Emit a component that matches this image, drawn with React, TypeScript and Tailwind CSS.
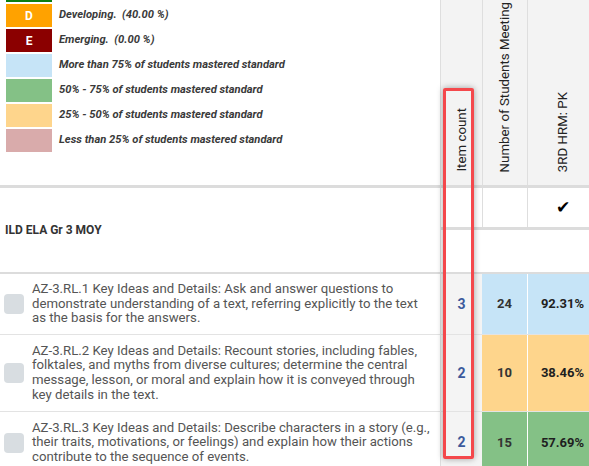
import React from 'react'

const legend = [
  { color: 'bg-[#0b7d12]', letter: '', label: '' },
  { color: 'bg-[#ffa200]', letter: 'D', label: 'Developing.  (40.00 %)' },
  { color: 'bg-[#8b0000]', letter: 'E', label: 'Emerging.  (0.00 %)' },
  { color: 'bg-[#c6e4f7]', letter: '', label: 'More than 75% of students mastered standard' },
  { color: 'bg-[#84c186]', letter: '', label: '50% - 75% of students mastered standard' },
  { color: 'bg-[#fed58c]', letter: '', label: '25% - 50% of students mastered standard' },
  { color: 'bg-[#d9abab]', letter: '', label: 'Less than 25% of students mastered standard' },
]

const rows = [
  {
    text: 'AZ-3.RL.1 Key Ideas and Details: Ask and answer questions to demonstrate understanding of a text, referring explicitly to the text as the basis for the answers.',
    count: 3,
    students: 24,
    pct: '92.31%',
    bg: 'bg-[#c6e4f7]',
    h: 'h-[61px]',
  },
  {
    text: 'AZ-3.RL.2 Key Ideas and Details: Recount stories, including fables, folktales, and myths from diverse cultures; determine the central message, lesson, or moral and explain how it is conveyed through key details in the text.',
    count: 2,
    students: 10,
    pct: '38.46%',
    bg: 'bg-[#fed58c]',
    h: 'h-[77px]',
  },
  {
    text: 'AZ-3.RL.3 Key Ideas and Details: Describe characters in a story (e.g., their traits, motivations, or feelings) and explain how their actions contribute to the sequence of events.',
    count: 2,
    students: 15,
    pct: '57.69%',
    bg: 'bg-[#84c186]',
    h: 'h-[62px]',
  },
]

function VerticalHeader({ label, width }: { label: string; width: string }) {
  return (
    <div className={`${width} h-full border-l border-[#dedede] bg-[#f3f3f3] flex flex-col justify-end items-center pb-[13px] overflow-hidden`}>
      <span className="[writing-mode:vertical-rl] rotate-180 whitespace-nowrap text-[13.3px] leading-none text-[#222]">
        {label}
      </span>
    </div>
  )
}

export default function App() {
  return (
    <div className="relative w-[589px] h-[466px] overflow-hidden bg-white font-['Roboto',sans-serif]">
      <div className="w-[597px]">
        {/* Header */}
        <div className="flex h-[188px] border-b-[3px] border-[#dcdcdc]">
          <div className="w-[440px] overflow-hidden">
            <div className="-mt-[21px] pl-[6px] flex flex-col gap-[2px]">
              {legend.map((l, i) => (
                <div key={i} className="flex items-center">
                  <div className={`${l.color} w-[46px] h-[23px] flex items-center justify-center text-white font-bold text-[12px]`}>
                    {l.letter}
                  </div>
                  <span className="ml-[7px] whitespace-pre italic font-bold text-[11.2px] text-[#3a3a3a]">
                    {l.label}
                  </span>
                </div>
              ))}
            </div>
          </div>
          <VerticalHeader label="Item count" width="w-[42px]" />
          <VerticalHeader label="Number of Students Meeting" width="w-[45px]" />
          <VerticalHeader label="3RD HRM: PK" width="w-[70px]" />
        </div>

        {/* Assessment group row */}
        <div className="flex h-[86px] border-b-2 border-[#dcdcdc]">
          <div className="w-[440px] flex items-center pl-[5px] font-bold text-[12px] text-[#333]">
            ILD ELA Gr 3 MOY
          </div>
          <div className="flex-1 flex flex-col border-l border-[#dedede]">
            <div className="flex h-[42px] border-b-[3px] border-[#dcdcdc]">
              <div className="w-[41px]" />
              <div className="w-[45px] border-l border-[#dedede]" />
              <div className="w-[70px] border-l border-[#dedede] flex items-center justify-center text-[17px] leading-none text-black">
                ✔
              </div>
            </div>
            <div className="flex-1" />
          </div>
        </div>

        {/* Standards */}
        {rows.map((r, i) => (
          <div key={i} className={`flex ${r.h} border-b border-[#e3e3e3]`}>
            <div className="w-[440px] flex items-center pl-[4px]">
              <div className="w-5 h-5 shrink-0 rounded-[4px] bg-[#d8dde1]" />
              <p className="ml-[8px] w-[400px] text-[13.2px] leading-[14.6px] text-[#555]">{r.text}</p>
            </div>
            <div className="w-[42px] border-l border-[#dedede] bg-[#f4f4f4] flex items-center justify-center font-bold text-[14px] text-[#3b5a9c]">
              {r.count}
            </div>
            <div className={`w-[45px] ${r.bg} flex items-center justify-center font-bold text-[13px] text-[#333]`}>
              {r.students}
            </div>
            <div className={`w-[70px] ${r.bg} border-l border-white flex items-center justify-center font-bold text-[13px] text-[#1f1f1f]`}>
              {r.pct}
            </div>
          </div>
        ))}
      </div>

      {/* Highlight annotation */}
      <div className="absolute left-[443px] top-[88px] w-[31px] h-[371px] border-[3px] border-[#f4484c] rounded-[2px] shadow-[0_0_6px_rgba(0,0,0,0.35)]" />
    </div>
  )
}
